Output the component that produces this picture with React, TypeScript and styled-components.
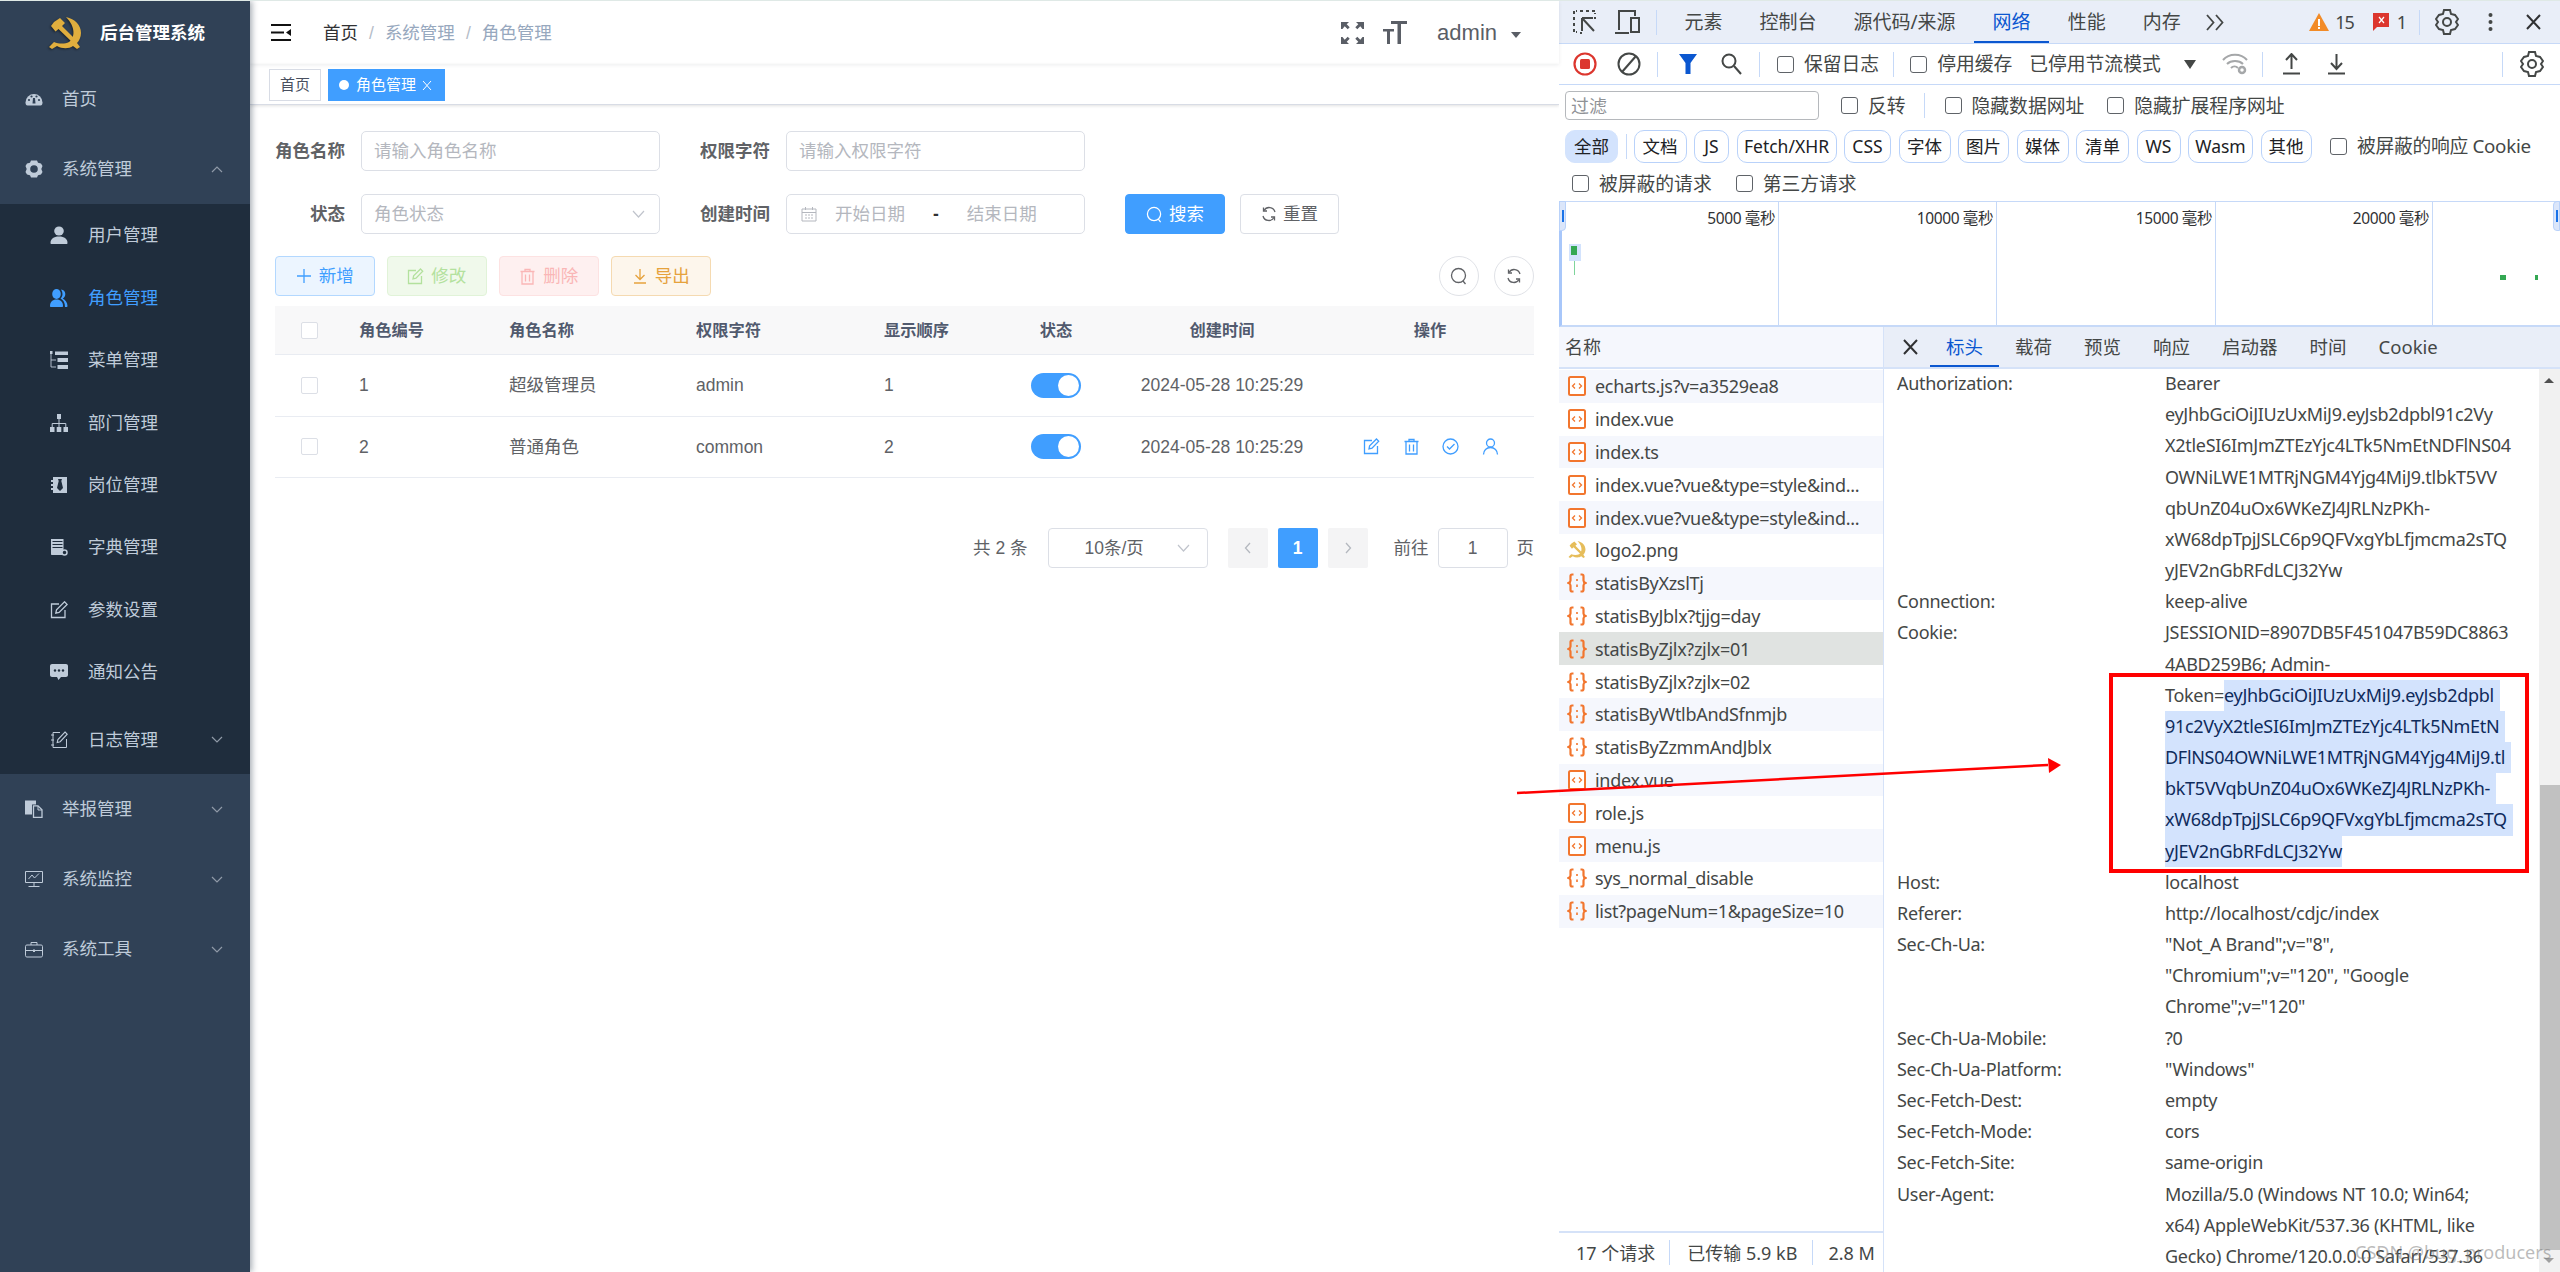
import React from 'react';
import styled, { createGlobalStyle } from 'styled-components';

const Global = createGlobalStyle`
  html, body { margin: 0; padding: 0; width: 2560px; height: 1272px; overflow: hidden; background: #fff; }
  * { box-sizing: border-box; }
  #root { width: 2560px; height: 1272px; }
`;

const SANS = `"Liberation Sans", "Noto Sans CJK SC", sans-serif`;
const DEV = `"Noto Sans", "Noto Sans CJK SC", sans-serif`;

const Page = styled.div`
  position: relative; display: flex; width: 2560px; height: 1272px; overflow: hidden;
  border-top: 1px solid #dfe9e6; font-family: ${SANS}; line-height: 22px;
`;

/* ---------- sidebar ---------- */
const Sidebar = styled.aside`
  width: 250px; flex: none; background: #304156; display: flex; flex-direction: column;
  box-shadow: 2px 0 6px rgba(0, 21, 41, .35); z-index: 2;
`;
const Brand = styled.div`
  height: 63px; display: flex; align-items: center; padding-left: 48px; gap: 18px;
  color: #fff; font-weight: 700; font-size: 17.5px;
`;
const MenuRow = styled.div<{ $sub?: boolean; $active?: boolean }>`
  height: ${p => (p.$sub ? '62.45px' : '70px')}; display: flex; align-items: center; flex: none;
  padding-left: ${p => (p.$sub ? '50px' : '25px')};
  color: ${p => (p.$active ? '#409eff' : '#bfcbd9')}; font-size: 17.5px; position: relative;
`;
const LogRow = styled(MenuRow)`
  height: 71px; padding-top: 1px;
`;
const MenuLabel = styled.span<{ $sub?: boolean }>`
  margin-left: ${p => (p.$sub ? '20px' : '19px')};
`;
const SubMenu = styled.div`
  background: #1f2d3d; display: flex; flex-direction: column; height: 570px;
`;
const Chevron = styled.svg`
  margin-left: auto; margin-right: 27px; width: 12px; height: 7px; flex: none; fill: none; stroke: #909aa8; stroke-width: 1.2;
`;
const MenuIcon = styled.svg`
  width: 18px; height: 18px; flex: none; fill: currentColor;
`;

const Dashboard = () => (
  <MenuIcon viewBox="0 0 18 18">
    <path d="M.5 12.5a8.5 8.5 0 0 1 17 0c0 2-.7 3-2 3h-13c-1.300 0-2-1-2-3z" />
    <g fill="#304156">
      <circle cx="4" cy="10" r="1.100" /><circle cx="6.500" cy="6.500" r="1.100" /><circle cx="11.500" cy="6.500" r="1.100" /><circle cx="14" cy="10" r="1.100" />
      <path d="M8 8h2l.5 5.500h-3z" />
    </g>
  </MenuIcon>
);
const Gear = () => (
  <MenuIcon viewBox="0 0 18 18">
    <path fillRule="evenodd" d="M6 .5h6l1 2.300 3 .7 1.500 2.500-1.200 3 1.200 3L16 14.500l-3 .7-1 2.300H6l-1-2.300-3-.7L.5 12l1.200-3-1.200-3L2 3.500l3-.7zM9 5.200a3.800 3.800 0 1 0 0 7.600 3.800 3.800 0 0 0 0-7.600z" />
  </MenuIcon>
);
const UserI = () => (
  <MenuIcon viewBox="0 0 18 18"><ellipse cx="9" cy="5" rx="4.800" ry="4.500" /><path d="M.5 17c0-4 3-6.500 8.500-6.500s8.500 2.500 8.500 6.500c0 .6-.4 1-1 1h-15c-.6 0-1-.4-1-1z" /></MenuIcon>
);
const Peoples = () => (
  <MenuIcon viewBox="0 0 18 18"><ellipse cx="6.500" cy="5" rx="4.300" ry="5" /><path d="M0 17c0-4 2.500-6.500 6.500-6.500S13 13 13 17c0 .6-.4 1-1 1H1c-.6 0-1-.4-1-1z" /><path d="M11 .5c3 .3 4.300 2.500 4.300 4.500s-1 3.500-2.500 4.500c2.500 1.500 4.700 4 4.700 7.500 0 .6-.4 1-1 1h-1.500c0-4-1.500-7-4.500-8.500 1.500-1.500 2-3 2-4.500S12 2 11 .5z" /></MenuIcon>
);
const TreeTable = () => (
  <MenuIcon viewBox="0 0 18 18"><path d="M0 0h2.500v3H0zM5 .5h13v3.500H5zM7.500 7h10.500v4H7.500zM7.500 14h10.500v4H7.500z" /><path d="M1 3v13h5M1 9h5" fill="none" stroke="currentColor" strokeWidth=".9" /></MenuIcon>
);
const Tree = () => (
  <MenuIcon viewBox="0 0 18 18"><path d="M7 0h4v5H7zM0 13h4.500v5H0zM6.700 13h4.600v5H6.700zM13.500 13H18v5h-4.500z" /><path d="M9 5v8M2.200 13V9.500h13.600V13" fill="none" stroke="currentColor" strokeWidth="1" /></MenuIcon>
);
const Post = () => (
  <MenuIcon viewBox="0 0 18 18">
    <path d="M3 1h14v16H3zM1 4h2v2H1zM1 8h2v2H1zM1 12h2v2H1z" />
    <path fill="#1f2d3d" d="M8 3h4l-.7 2 1.700 7-3 3-3-3 1.700-7z" />
  </MenuIcon>
);
const Dict = () => (
  <MenuIcon viewBox="0 0 18 18">
    <path d="M1 1h12.500v16H2c-.6 0-1-.4-1-1z" />
    <path d="M2.500 3.500h10M2.500 6.500h10M2.500 9.500h10" stroke="#1f2d3d" strokeWidth="1" />
    <circle cx="14.500" cy="14.500" r="2.500" fill="#1f2d3d" stroke="currentColor" strokeWidth="1.500" />
  </MenuIcon>
);
const EditI = () => (
  <MenuIcon viewBox="0 0 18 18">
    <path d="M9 3H1.500v13.500H15V9" fill="none" stroke="currentColor" strokeWidth="1.300" />
    <path d="M14.500.8l2.600 2.600-8 8-3.300.7.700-3.300z" fill="none" stroke="currentColor" strokeWidth="1.300" />
  </MenuIcon>
);
const Message = () => (
  <MenuIcon viewBox="0 0 18 18">
    <path d="M2 1h14c1 0 2 .8 2 2v9c0 1-1 2-2 2h-5l-2.500 3L7 14H2c-1 0-2-1-2-2V3c0-1.200 1-2 2-2z" />
    <g fill="#1f2d3d"><circle cx="5" cy="7.500" r="1.200" /><circle cx="9" cy="7.500" r="1.200" /><circle cx="13" cy="7.500" r="1.200" /></g>
  </MenuIcon>
);
const LogI = () => (
  <MenuIcon viewBox="0 0 18 18">
    <path d="M10 1.500H3v15h13.500V8" fill="none" stroke="currentColor" strokeWidth="1" />
    <path d="M15 1l2.200 2.200-7 7.500-3 .8.700-3z" fill="none" stroke="currentColor" strokeWidth="1.100" />
    <path d="M1 4h3M1 9h3M1 14h3" stroke="currentColor" strokeWidth="1" />
  </MenuIcon>
);
const Docs = () => (
  <MenuIcon viewBox="0 0 18 18">
    <path d="M0 .5h11v4H7v10H0z" />
    <path d="M8.500 5.800H13l4 4v7.700H8.500z" fill="none" stroke="currentColor" strokeWidth="1.300" />
    <path d="M13 6v4h4" fill="none" stroke="currentColor" strokeWidth="1" />
  </MenuIcon>
);
const Monitor = () => (
  <MenuIcon viewBox="0 0 18 18">
    <path d="M.5 1.500h17v11H.5zM9 12.500V16M3.500 16.500h11" fill="none" stroke="currentColor" strokeWidth="1" />
    <path d="M3.500 9L7 5l2.500 3L14 3.500" fill="none" stroke="currentColor" strokeWidth="1" />
  </MenuIcon>
);
const Briefcase = () => (
  <MenuIcon viewBox="0 0 18 18">
    <path d="M1.800 5h14.400c.7 0 1.300.6 1.300 1.300v9.400c0 .7-.6 1.300-1.300 1.300H1.800c-.7 0-1.300-.6-1.300-1.300V6.300C.5 5.600 1.100 5 1.800 5zM6 5V2.500h6V5M.5 10.500h17" fill="none" stroke="currentColor" strokeWidth="1" />
    <path d="M8 9.500h2v2.500H8z" />
  </MenuIcon>
);

const Up = () => <Chevron viewBox="0 0 12 7"><path d="M1 6l5-5 5 5" /></Chevron>;
const Down = () => <Chevron viewBox="0 0 12 7"><path d="M1 1l5 5 5-5" /></Chevron>;

const SICKLE = 'M18 1C27 3 33 9 33 17C33 21 31 25 29 27L32 31L29 33L25 30C21 33 14 33 9 30L4 33L1 31L6 26C11 28 17 28 21 26C27 22 28 11 18 1z';
const HAMMER = 'M6 6L12 2L17 7L14 10L27 23L24 26L10.500 13L7.500 15.500L3 10z';
const LogoSvg = styled.svg`
  flex: none; filter: drop-shadow(-1px 1px 1px rgba(0, 0, 0, .45));
`;
const Logo = () => (
  <LogoSvg width="34" height="34" viewBox="0 0 34 34"><g fill="#e0ae3e"><path d={SICKLE} /><path d={HAMMER} /></g></LogoSvg>
);

/* ---------- main ---------- */
const Main = styled.main`
  width: 1309px; flex: none; display: flex; flex-direction: column; color: #606266;
`;
const TopNav = styled.header`
  height: 63px; flex: none; display: flex; align-items: center; padding-left: 21px;
  box-shadow: 0 1px 4px rgba(0, 21, 41, .08); position: relative; z-index: 1;
`;
const Crumbs = styled.nav`
  margin-left: 32px; display: flex; font-size: 17.5px; color: #303133;
`;
const Crumb = styled.span<{ $muted?: boolean }>`
  color: ${p => (p.$muted ? '#97a8be' : '#303133')};
`;
const CrumbSep = styled.span`
  color: #b5bcc8; margin: 0 11px; font-weight: 400;
`;
const NavRight = styled.div`
  margin-left: auto; display: flex; align-items: center; color: #5a5e66; padding-right: 38px;
`;
const AdminName = styled.span`
  font-size: 22px; margin-left: 30px;
`;
const Caret = styled.i`
  margin-left: 14px; margin-top: 5px; width: 0; height: 0; border-left: 5px solid transparent; border-right: 5px solid transparent; border-top: 6px solid #5a5e66;
`;
const TabsBar = styled.div`
  height: 41px; flex: none; display: flex; align-items: flex-start; padding: 5px 0 0 19px; gap: 7px;
  border-bottom: 1px solid #d8dce5; box-shadow: 0 1px 3px rgba(0, 0, 0, .12);
`;
const Tag = styled.div<{ $active?: boolean }>`
  height: 32px; padding: 0 ${p => (p.$active ? '12px' : '10px')} 0 10px; display: flex; align-items: center;
  font-size: 15px; border: 1px solid ${p => (p.$active ? '#409eff' : '#d8dce5')};
  background: ${p => (p.$active ? '#409eff' : '#fff')}; color: ${p => (p.$active ? '#fff' : '#495060')};
`;
const Dot = styled.i`
  width: 10px; height: 10px; border-radius: 50%; background: #fff; margin-right: 7px;
`;
const TagClose = styled.svg`
  width: 10px; height: 11px; margin-left: 6px; fill: none; stroke: #fff; stroke-width: 1;
`;
const Content = styled.section`
  padding: 26px 25px 0 25px; display: flex; flex-direction: column;
`;
const FormRow = styled.div`
  display: flex; align-items: center; height: 40px; margin-bottom: 23px;
`;
const FormRowLast = styled(FormRow)`
  margin-bottom: 22px;
`;
const Label = styled.label<{ $next?: boolean }>`
  width: 70px; text-align: right; font-size: 17.5px; font-weight: 700; color: #606266; flex: none; margin-right: 16px;
  margin-left: ${p => (p.$next ? '40px' : '0')};
`;
const Field = styled.div`
  width: 299px; height: 40px; border: 1px solid #dcdfe6; border-radius: 5px; display: flex; align-items: center;
  padding: 0 12px; font-size: 17.5px; color: #b4b7be; flex: none;
`;
const FieldChevron = styled.svg`
  margin-left: auto; width: 13px; height: 8px; fill: none; stroke: #c0c4cc; stroke-width: 1.200;
`;
const DateText = styled.span<{ $start?: boolean }>`
  margin-left: ${p => (p.$start ? '18px' : '28px')};
`;
const DateDash = styled.span`
  margin-left: 28px; color: #303133; font-weight: 700;
`;
const DateField = styled(Field)`
  padding: 0 14px;
`;
const SelectField = styled(Field)`
  padding: 0 14px 0 12px;
`;
const Btn = styled.button<{ $primary?: boolean; $first?: boolean }>`
  height: 40px; width: ${p => (p.$primary ? '100px' : '99px')}; margin-left: ${p => (p.$first ? '40px' : '15px')};
  border-radius: 4px; font: 17.5px/22px ${SANS}; display: flex; align-items: center; justify-content: center; gap: 6px; padding: 0;
  background: ${p => (p.$primary ? '#409eff' : '#fff')}; color: ${p => (p.$primary ? '#fff' : '#606266')};
  border: 1px solid ${p => (p.$primary ? '#409eff' : '#dcdfe6')};
`;
const Tools = styled.div`
  display: flex; align-items: center; height: 40px; margin-bottom: 10px; gap: 12.500px;
`;
const ToolBtn = styled.button<{ $bg: string; $bd: string; $fg: string }>`
  height: 40px; width: 99.500px; border-radius: 4px; font: 17.5px/22px ${SANS}; padding: 0; display: flex; align-items: center; justify-content: center; gap: 7px;
  background: ${p => p.$bg}; border: 1px solid ${p => p.$bd}; color: ${p => p.$fg};
`;
const CircleBtn = styled.button<{ $first?: boolean }>`
  width: 40px; height: 40px; border-radius: 50%; background: #fff; border: 1px solid #e0e2e7; padding: 0; color: #606266;
  display: flex; align-items: center; justify-content: center; flex: none;
  margin-left: ${p => (p.$first ? 'auto' : '2.500px')};
`;
const TableRow = styled.div<{ $head?: boolean; $h: string }>`
  display: grid; grid-template-columns: 69px 150px 187px 188px 125px 124px 208px 208px; align-items: center;
  height: ${p => p.$h}; border-bottom: 1px solid #e9ecf2; background: ${p => (p.$head ? '#f8f8f9' : '#fff')};
  color: ${p => (p.$head ? '#515a6e' : '#606266')}; font-size: ${p => (p.$head ? '16.250px' : '17.500px')};
  font-weight: ${p => (p.$head ? 700 : 400)};
`;
const Cell = styled.div<{ $center?: boolean }>`
  padding-left: ${p => (p.$center ? '0' : '15px')}; text-align: ${p => (p.$center ? 'center' : 'left')};
  display: ${p => (p.$center ? 'flex' : 'block')}; justify-content: center; align-items: center;
`;
const CheckCell = styled.div`
  padding-left: 26px; display: flex;
`;
const Box = styled.span`
  width: 17px; height: 17px; border: 1px solid #dcdfe6; border-radius: 2px; background: #fff; display: block;
`;
const Toggle = styled.span`
  width: 50px; height: 25px; border-radius: 13px; background: #409eff; position: relative; display: block;
  &::after { content: ''; position: absolute; right: 2px; top: 2px; width: 21px; height: 21px; border-radius: 50%; background: #fff; }
`;
const Actions = styled.div`
  display: flex; justify-content: center; gap: 22.500px; color: #409eff; align-items: center; padding-left: 2px;
`;
const Pager = styled.div`
  margin-top: 50px; height: 40px; display: flex; align-items: center; justify-content: flex-end; font-size: 17.5px; color: #606266;
`;
const PageSize = styled.div`
  margin-left: 20px; width: 160px; height: 40px; border: 1px solid #dcdfe6; border-radius: 4px; display: flex; align-items: center; padding: 0 17px 0 36px;
`;
const PageBtn = styled.div<{ $active?: boolean; $first?: boolean }>`
  width: 40px; height: 40px; border-radius: 2px; margin-left: ${p => (p.$first ? '20px' : '10px')};
  background: ${p => (p.$active ? '#409eff' : '#f4f4f5')}; color: ${p => (p.$active ? '#fff' : '#b4b8bf')}; font-weight: 700;
  display: flex; align-items: center; justify-content: center;
`;
const PageInput = styled.div`
  width: 70px; height: 40px; border: 1px solid #dcdfe6; border-radius: 4px; display: flex; align-items: center; justify-content: center; margin: 0 9px;
`;
const GoLabel = styled.span`
  margin-left: 26px;
`;

const Ic = styled.svg<{ $s?: number }>`
  width: ${p => p.$s ?? 17}px; height: ${p => p.$s ?? 17}px; fill: none; stroke: currentColor; stroke-width: 1.300; flex: none;
`;
const SearchI = ({ s = 18 }: { s?: number }) => <Ic $s={s} viewBox="0 0 18 18"><circle cx="8.500" cy="8.500" r="7" /><path d="M13 14l2.500 3" /></Ic>;
const RefreshI = ({ s = 16 }: { s?: number }) => <Ic $s={s} viewBox="0 0 16 16"><path d="M14 6a6 6 0 0 0-11-1.500M2 10a6 6 0 0 0 11 1.500" /><path d="M2.500 1.500v3.500H6M13.500 14.500V11H10" /></Ic>;
const EditSm = () => <Ic viewBox="0 0 17 17"><path d="M9 2.500H1.500v13h13V8" /><path d="M13.500 1l2.200 2.200-6.700 7-3 .6.600-3z" /></Ic>;
const Trash = () => <Ic viewBox="0 0 17 17"><path d="M1.500 3.500h14M6 3.500V1.500h5v2M3 3.500v12.500h11V3.500M6.500 6.500v7M10.500 6.500v7" /></Ic>;
const CheckC = () => <Ic viewBox="0 0 17 17"><circle cx="8.500" cy="8.500" r="7.500" /><path d="M5 8.500l2.500 2.500L12.500 6" /></Ic>;
const UserSm = () => <Ic viewBox="0 0 17 17"><circle cx="8.500" cy="5" r="4" /><path d="M1.500 16.500c0-4 3-7 7-7s7 3 7 7" /></Ic>;
const Plus = () => <Ic $s={16} viewBox="0 0 16 16"><path d="M8 1v14M1 8h14" /></Ic>;
const Download = () => <Ic $s={16} viewBox="0 0 16 16"><path d="M8 1v10M3.500 7L8 11.500 12.500 7M2 15h12" /></Ic>;
const Calendar = () => <Ic $s={16} viewBox="0 0 16 16"><path d="M1 3h14v12H1zM1 6.500h14M4 9h2M7 9h2M10 9h2M4 12h2M7 12h2M10 12h2M4.500 1v3M11.500 1v3" strokeWidth="1" /></Ic>;
const PagerArrow = ({ left }: { left?: boolean }) => <Ic $s={12} viewBox="0 0 12 12"><path d={left ? 'M8 1L3.500 6 8 11' : 'M4 1l4.500 5L4 11'} /></Ic>;
const Hamburger = () => (
  <svg width="20" height="17" viewBox="0 0 20 17" fill="#111"><path d="M0 0h20v2H0zM0 7.500h13v2H0zM0 15h20v2H0zM15 8.500L20 5v7z" /></svg>
);
const Expand = () => (
  <svg width="23" height="22" viewBox="0 0 23 22" fill="#5a5e66">
    <path d="M0 0h8L5.700 2.300l3 3-2 2-3-3L1.500 7H0zM23 0h-8l2.300 2.300-3 3 2 2 3-3L21.500 7H23zM0 22h8l-2.300-2.300 3-3-2-2-3 3L1.500 15H0zM23 22h-8l2.300-2.300-3-3 2-2 3 3 2.200-2.700H23z" />
  </svg>
);
const FontSizeSvg = styled.svg`
  margin-left: 19px; fill: #5a5e66;
`;
const FontSizeI = () => (
  <FontSizeSvg width="24" height="23" viewBox="0 0 24 23">
    <path d="M8 0h16v3h-6v20h-3.500V3H8zM0 8h11v2.500H7V23H4V10.500H0z" />
  </FontSizeSvg>
);

/* ---------- devtools ---------- */
const Dev = styled.div`
  width: 1001px; flex: none; display: flex; flex-direction: column; font-family: ${DEV}; font-size: 18px; color: #444746; background: #fff; letter-spacing: -.3px;
`;
const DevBar = styled.div`
  height: 43px; flex: none; background: #e9eef8; border-bottom: 1px solid #c6d9f8; display: flex; align-items: stretch; padding-left: 14px;
`;
const DevTab = styled.div<{ $active?: boolean }>`
  display: flex; align-items: center; padding: 0 18.500px; font-size: 19px; letter-spacing: 0;
  color: ${p => (p.$active ? '#0b57d0' : '#444746')}; box-shadow: ${p => (p.$active ? 'inset 0 -2px 0 #0b57d0' : 'none')};
`;
const Sep = styled.i<{ $ml?: number; $mr?: number }>`
  width: 1px; height: 25px; background: #c6d9f8; flex: none; align-self: center;
  margin-left: ${p => p.$ml ?? 0}px; margin-right: ${p => p.$mr ?? 0}px;
`;
const IconSlot = styled.span<{ $ml?: number }>`
  display: flex; align-items: center; margin-left: ${p => p.$ml ?? 0}px; flex: none; color: #444746;
`;
const CountText = styled.span<{ $ml?: number }>`
  margin-left: ${p => p.$ml ?? 0}px; align-self: center; font-size: 18px; color: #444746; letter-spacing: -1px;
`;
const DevRow = styled.div<{ $h: number; $pl?: number; $line?: boolean }>`
  height: ${p => p.$h}px; flex: none; display: flex; align-items: center; padding-left: ${p => p.$pl ?? 0}px;
  border-bottom: ${p => (p.$line ? '1px solid #c6d9f8' : 'none')}; white-space: nowrap;
`;
const CB = styled.i<{ $ml?: number }>`
  width: 17px; height: 17px; border: 1.500px solid #5f6368; border-radius: 3px; flex: none; margin-left: ${p => p.$ml ?? 0}px; display: block;
`;
const CBText = styled.span<{ $tight?: boolean }>`
  margin-left: 10px; letter-spacing: ${p => (p.$tight ? '-.3px' : '0')}; font-size: 18.800px;
`;
const FilterBox = styled.div`
  width: 254px; height: 29px; border: 1px solid #b5b8bc; border-radius: 4px; color: #8f9296; padding-left: 5px; display: flex; align-items: center; flex: none; margin-left: 6px; letter-spacing: 0;
`;
const Pill = styled.span<{ $w: number; $active?: boolean }>`
  width: ${p => p.$w}px; height: 33px; border-radius: 10px; display: flex; align-items: center; justify-content: center; flex: none; margin-right: 7.500px; font-size: 17.5px; letter-spacing: 0;
  background: ${p => (p.$active ? '#d3e3fd' : '#fff')}; border: 1px solid ${p => (p.$active ? '#d3e3fd' : '#b9d2fa')}; color: #202124;
`;
const Overview = styled.div`
  height: 126px; flex: none; display: grid; grid-template-columns: 217px 218px 219px 217px 1fr; position: relative;
  border-top: 1px solid #c6d9f8; border-bottom: 2px solid #c6d9f8; border-left: 3px solid #a8c7fa;
`;
const Tick = styled.div`
  border-right: 1px solid #c6d9f8; text-align: right; padding: 5px 3px 0 0; font-size: 15.5px; color: #303133; letter-spacing: -.4px;
`;
const TickLast = styled.div``;
const Handle = styled.i<{ $right?: boolean }>`
  position: absolute; top: -1px; width: 7px; height: 30px; background: #dbe6fa; border: 1px solid #b9d2fa;
  ${p => (p.$right ? 'right: 0; border-radius: 4px 0 0 4px;' : 'left: -3px; border-radius: 0 0 4px 0;')}
  &::after { content: ''; position: absolute; top: 8px; left: 2px; width: 2px; height: 12px; background: #1a73e8; }
`;
const Blip = styled.i<{ $x: number; $y: number; $w: number; $h: number; $c: string }>`
  position: absolute; left: ${p => p.$x}px; top: ${p => p.$y}px; width: ${p => p.$w}px; height: ${p => p.$h}px; background: ${p => p.$c};
`;
const Lower = styled.div`
  flex: 1; min-height: 0; display: flex;
`;
const NamesPane = styled.div`
  width: 325px; flex: none; display: flex; flex-direction: column; border-right: 1px solid #d5e2f8;
`;
const NamesHead = styled.div`
  height: 42px; flex: none; background: #f5f7fd; border-bottom: 2px solid #d5e2f8; display: flex; align-items: center; padding-left: 6px; letter-spacing: 0;
`;
const NameList = styled.div`
  flex: 1; min-height: 0; padding-top: 1px;
`;
const NameRow = styled.div<{ $odd?: boolean; $sel?: boolean }>`
  height: 32.800px; display: flex; align-items: center; padding-left: 8px; gap: 8px; white-space: nowrap; overflow: hidden;
  background: ${p => (p.$sel ? '#e0e3e1' : p.$odd ? '#f5f7fd' : '#fff')};
`;
const IconBox = styled.span`
  width: 20px; flex: none; display: flex; justify-content: center;
`;
const StatusBar = styled.div`
  height: 41px; flex: none; border-top: 2px solid #d5e2f8; display: flex; align-items: center; padding-left: 17px; letter-spacing: 0;
`;
const DetailPane = styled.div`
  flex: 1; min-width: 0; display: flex; flex-direction: column;
`;
const DetailTabs = styled.div`
  height: 42px; flex: none; background: #e9eef8; border-bottom: 2px solid #d5e2f8; display: flex; align-items: stretch; padding-left: 19px;
`;
const DetailTab = styled.div<{ $active?: boolean }>`
  display: flex; align-items: center; padding: 0 16px; letter-spacing: 0; font-size: 18.500px;
  color: ${p => (p.$active ? '#0b57d0' : '#444746')}; box-shadow: ${p => (p.$active ? 'inset 0 -2px 0 #0b57d0' : 'none')};
`;
const DetailBody = styled.div`
  flex: 1; min-height: 0; display: flex;
`;
const HeaderList = styled.div`
  flex: 1; min-width: 0; overflow: hidden; padding-left: 13px;
`;
const HeaderFlow = styled.div`
  margin-top: -1px;
`;
const HeaderRow = styled.div`
  display: grid; grid-template-columns: 268px 1fr; line-height: 31.180px; white-space: nowrap;
`;
const ValLine = styled.div`
  height: 31.180px;
`;
const Sel = styled.span<{ $tail?: boolean }>`
  background: #d3e3fd; display: inline-block; height: 31.180px; color: #0f2b5c; padding-right: ${p => (p.$tail ? '0' : '6px')};
`;
const Scrollbar = styled.div`
  width: 21px; flex: none; background: #f1f1f1; position: relative;
`;
const ScrollThumb = styled.i`
  position: absolute; top: 416px; bottom: 22px; left: 1px; right: 0; background: #c1c1c1;
`;
const ScrollArrow = styled.i<{ $down?: boolean }>`
  position: absolute; left: 5px; width: 0; height: 0; border-left: 5px solid transparent; border-right: 5px solid transparent;
  ${p => (p.$down ? 'bottom: 9px; border-top: 5px solid #a0a0a0;' : 'top: 9px; border-bottom: 5px solid #505050;')}
`;
const RedBox = styled.div`
  position: absolute; left: 2109px; top: 672px; width: 420px; height: 200px; border: 4px solid #f00; pointer-events: none;
`;
const ArrowLayer = styled.svg`
  position: absolute; left: 1500px; top: 745px; width: 580px; height: 60px; pointer-events: none;
`;
const Watermark = styled.div`
  position: absolute; left: 2355px; top: 1240px; font-family: ${DEV}; font-size: 18px; color: rgba(120, 120, 120, .5); white-space: nowrap;
`;

const S = styled.svg`flex: none; display: block;`;
const DocIcon = () => (
  <S width="18" height="20" viewBox="0 0 18 20" fill="none">
    <rect x="1" y="1" width="16" height="18" rx="1.500" fill="#fff" stroke="#f2762e" strokeWidth="2" />
    <path d="M7 7.500L4.500 10 7 12.500M11 7.500l2.500 2.500-2.500 2.500" stroke="#f2762e" strokeWidth="1.300" />
  </S>
);
const BraceIcon = () => (
  <S width="20" height="20" viewBox="0 0 20 20" fill="none" stroke="#f2762e" strokeWidth="2.200">
    <path d="M6.500 1.500H5c-1 0-1.500.7-1.500 1.700v4.300c0 1-.7 2-2 2.500 1.300.5 2 1.500 2 2.500v4.300c0 1 .5 1.700 1.500 1.700h1.500" />
    <path d="M13.500 1.500H15c1 0 1.500.7 1.500 1.700v4.300c0 1 .7 2 2 2.500-1.300.5-2 1.500-2 2.500v4.300c0 1-.5 1.700-1.500 1.700h-1.500" />
    <path d="M10 6v2M10 11.500v2.500" strokeWidth="1.600" />
  </S>
);
const PngIcon = () => (
  <S width="18" height="20" viewBox="0 0 34 36"><g fill="#e6bd5a"><path d={SICKLE} /><path d={HAMMER} /></g></S>
);
const DevGear = ({ size = 24 }: { size?: number }) => (
  <S width={size} height={size + 4} viewBox="0 0 24 28" fill="none" stroke="#444746" strokeWidth="2">
    <path d="M9 2h6l1 4 4 1 3 4-2 3 2 3-3 4-4 1-1 4H9l-1-4-4-1-3-4 2-3-2-3 3-4 4-1z" />
    <circle cx="12" cy="14" r="4" />
  </S>
);
const Inspect = () => (
  <S width="23" height="24" viewBox="0 0 23 24" fill="none" stroke="#444746" strokeWidth="2">
    <path d="M1 4V1h3M7 1h3M13 1h3M19 1h3v3M1 7v3M1 13v3M1 19v3h3M7 23h2M22 7v2" strokeDasharray="3 2" />
    <path d="M9 8v13M9 8h11M9 8l12 13" />
  </S>
);
const Device = () => (
  <S width="26" height="24" viewBox="0 0 26 24" fill="none" stroke="#444746" strokeWidth="2">
    <path d="M5 20V1h16v5M1 23h14" />
    <rect x="17" y="8" width="8" height="14" />
  </S>
);
const Warn = () => (
  <S width="20" height="18" viewBox="0 0 20 18"><path d="M10 0l10 18H0z" fill="#f28b27" /><path d="M9 6h2v7H9zM9 14h2v2H9z" fill="#fff" /></S>
);
const Flag = () => (
  <S width="17" height="18" viewBox="0 0 17 18"><path d="M0 0h16v14H4l-4 4z" fill="#dc362e" /><path d="M6 4l5 6M11 4l-5 6" stroke="#fff" strokeWidth="1.200" /></S>
);
const Chevrons = () => (
  <S width="20" height="17" viewBox="0 0 20 17" fill="none" stroke="#444746" strokeWidth="1.800"><path d="M2 1l6.500 7.500L2 16M11 1l6.500 7.500L11 16" /></S>
);
const Kebab = () => (
  <S width="5" height="20" viewBox="0 0 5 20" fill="#444746"><circle cx="2.500" cy="3" r="2" /><circle cx="2.500" cy="10" r="2" /><circle cx="2.500" cy="17" r="2" /></S>
);
const CloseX = () => (
  <S width="15" height="16" viewBox="0 0 15 16" fill="none" stroke="#303133" strokeWidth="2"><path d="M1 1l13 14M14 1L1 15" /></S>
);
const Rec = () => (
  <S width="24" height="24" viewBox="0 0 24 24" fill="none"><circle cx="12" cy="12" r="10.500" stroke="#dc362e" strokeWidth="2.200" /><rect x="7" y="7" width="10" height="10" rx="1.500" fill="#dc362e" /></S>
);
const Clear = () => (
  <S width="24" height="24" viewBox="0 0 24 24" fill="none" stroke="#444746" strokeWidth="2"><circle cx="12" cy="12" r="10.500" /><path d="M19 4L5 20" /></S>
);
const Funnel = () => (
  <S width="18" height="20" viewBox="0 0 18 20"><path d="M0 0h18l-6.500 9v11h-5V9z" fill="#0b57d0" /></S>
);
const DevSearch = () => (
  <S width="21" height="22" viewBox="0 0 21 22" fill="none" stroke="#444746" strokeWidth="2"><circle cx="8" cy="8" r="6.500" /><path d="M13 13l7 8" /></S>
);
const Wifi = () => (
  <S width="26" height="22" viewBox="0 0 26 22" fill="none" stroke="#a5a7a9" strokeWidth="2">
    <path d="M1 7c6-7 18-7 24 0M5 11c4-4 12-4 16 0M9 15c2-2 5-2 7 0" />
    <circle cx="20" cy="17" r="3" strokeWidth="2.500" />
  </S>
);
const UpI = () => (
  <S width="19" height="22" viewBox="0 0 19 22" fill="none" stroke="#444746" strokeWidth="2"><path d="M9.500 16V2M4 7l5.500-6L15 7M1 20.500h17" /></S>
);
const DownI = () => (
  <S width="19" height="22" viewBox="0 0 19 22" fill="none" stroke="#444746" strokeWidth="2"><path d="M9.500 1v14M4 10l5.500 6 5.500-6M1 20.500h17" /></S>
);
const TriDown = styled.i`
  margin-left: 23px; width: 0; height: 0; border-left: 6px solid transparent; border-right: 6px solid transparent; border-top: 9px solid #444746; flex: none;
`;
const Spaced = styled.span<{ $ml: number }>`
  margin-left: ${p => p.$ml}px; letter-spacing: 0; font-size: 18.800px;
`;

const sub = [
  { t: '用户管理', I: UserI }, { t: '角色管理', I: Peoples, active: true }, { t: '菜单管理', I: TreeTable },
  { t: '部门管理', I: Tree }, { t: '岗位管理', I: Post }, { t: '字典管理', I: Dict },
  { t: '参数设置', I: EditI }, { t: '通知公告', I: Message },
];
const files: [string, 'doc' | 'brace' | 'png'][] = [
  ['echarts.js?v=a3529ea8', 'doc'], ['index.vue', 'doc'], ['index.ts', 'doc'],
  ['index.vue?vue&type=style&ind...', 'doc'], ['index.vue?vue&type=style&ind...', 'doc'], ['logo2.png', 'png'],
  ['statisByXzslTj', 'brace'], ['statisByJblx?tjjg=day', 'brace'], ['statisByZjlx?zjlx=01', 'brace'],
  ['statisByZjlx?zjlx=02', 'brace'], ['statisByWtlbAndSfnmjb', 'brace'], ['statisByZzmmAndJblx', 'brace'],
  ['index.vue', 'doc'], ['role.js', 'doc'], ['menu.js', 'doc'], ['sys_normal_disable', 'brace'],
  ['list?pageNum=1&pageSize=10', 'brace'],
];
const pills: [string, number][] = [['文档', 53], ['JS', 35], ['Fetch/XHR', 100], ['CSS', 47], ['字体', 52], ['图片', 51], ['媒体', 52], ['清单', 53], ['WS', 44], ['Wasm', 65], ['其他', 51]];

const headers: { k: string; v: React.ReactNode[] }[] = [
  { k: 'Authorization:', v: ['Bearer', 'eyJhbGciOiJIUzUxMiJ9.eyJsb2dpbl91c2Vy', 'X2tleSI6ImJmZTEzYjc4LTk5NmEtNDFlNS04', 'OWNiLWE1MTRjNGM4Yjg4MiJ9.tlbkT5VV', 'qbUnZ04uOx6WKeZJ4JRLNzPKh-', 'xW68dpTpjJSLC6p9QFVxgYbLfjmcma2sTQ', 'yJEV2nGbRFdLCJ32Yw'] },
  { k: 'Connection:', v: ['keep-alive'] },
  {
    k: 'Cookie:', v: [
      'JSESSIONID=8907DB5F451047B59DC8863', '4ABD259B6; Admin-',
      <>Token=<Sel>eyJhbGciOiJIUzUxMiJ9.eyJsb2dpbl</Sel></>,
      <Sel>91c2VyX2tleSI6ImJmZTEzYjc4LTk5NmEtN</Sel>,
      <Sel>DFlNS04OWNiLWE1MTRjNGM4Yjg4MiJ9.tl</Sel>,
      <Sel>bkT5VVqbUnZ04uOx6WKeZJ4JRLNzPKh-</Sel>,
      <Sel>xW68dpTpjJSLC6p9QFVxgYbLfjmcma2sTQ</Sel>,
      <Sel $tail>yJEV2nGbRFdLCJ32Yw</Sel>,
    ],
  },
  { k: 'Host:', v: ['localhost'] },
  { k: 'Referer:', v: ['http://localhost/cdjc/index'] },
  { k: 'Sec-Ch-Ua:', v: ['"Not_A Brand";v="8",', '"Chromium";v="120", "Google', 'Chrome";v="120"'] },
  { k: 'Sec-Ch-Ua-Mobile:', v: ['?0'] },
  { k: 'Sec-Ch-Ua-Platform:', v: ['"Windows"'] },
  { k: 'Sec-Fetch-Dest:', v: ['empty'] },
  { k: 'Sec-Fetch-Mode:', v: ['cors'] },
  { k: 'Sec-Fetch-Site:', v: ['same-origin'] },
  { k: 'User-Agent:', v: ['Mozilla/5.0 (Windows NT 10.0; Win64;', 'x64) AppleWebKit/537.36 (KHTML, like', 'Gecko) Chrome/120.0.0.0 Safari/537.36'] },
];

const rows = [
  { id: '1', name: '超级管理员', key: 'admin', ord: '1', ops: false },
  { id: '2', name: '普通角色', key: 'common', ord: '2', ops: true },
];

export default function App() {
  return (
    <Page>
      <Global />
      <Sidebar>
        <Brand><Logo />后台管理系统</Brand>
        <MenuRow><Dashboard /><MenuLabel>首页</MenuLabel></MenuRow>
        <MenuRow><Gear /><MenuLabel>系统管理</MenuLabel><Up /></MenuRow>
        <SubMenu>
          {sub.map(s => (
            <MenuRow key={s.t} $sub $active={s.active}><s.I /><MenuLabel $sub>{s.t}</MenuLabel></MenuRow>
          ))}
          <LogRow $sub><LogI /><MenuLabel $sub>日志管理</MenuLabel><Down /></LogRow>
        </SubMenu>
        <MenuRow><Docs /><MenuLabel>举报管理</MenuLabel><Down /></MenuRow>
        <MenuRow><Monitor /><MenuLabel>系统监控</MenuLabel><Down /></MenuRow>
        <MenuRow><Briefcase /><MenuLabel>系统工具</MenuLabel><Down /></MenuRow>
      </Sidebar>

      <Main>
        <TopNav>
          <Hamburger />
          <Crumbs>
            <Crumb>首页</Crumb><CrumbSep>/</CrumbSep><Crumb $muted>系统管理</Crumb><CrumbSep>/</CrumbSep><Crumb $muted>角色管理</Crumb>
          </Crumbs>
          <NavRight>
            <Expand /><FontSizeI />
            <AdminName>admin</AdminName><Caret />
          </NavRight>
        </TopNav>
        <TabsBar>
          <Tag>首页</Tag>
          <Tag $active><Dot />角色管理<TagClose viewBox="0 0 10 11"><path d="M1 1l8 9M9 1l-8 9" /></TagClose></Tag>
        </TabsBar>
        <Content>
          <FormRow>
            <Label>角色名称</Label><Field>请输入角色名称</Field>
            <Label $next>权限字符</Label><Field>请输入权限字符</Field>
          </FormRow>
          <FormRowLast>
            <Label>状态</Label>
            <SelectField>角色状态<FieldChevron viewBox="0 0 13 8"><path d="M1 1l5.500 6L12 1" /></FieldChevron></SelectField>
            <Label $next>创建时间</Label>
            <DateField><Calendar /><DateText $start>开始日期</DateText><DateDash>-</DateDash><DateText>结束日期</DateText></DateField>
            <Btn $primary $first><SearchI s={17} />搜索</Btn>
            <Btn><RefreshI />重置</Btn>
          </FormRowLast>
          <Tools>
            <ToolBtn $bg="#ecf5ff" $bd="#b3d8ff" $fg="#409eff"><Plus />新增</ToolBtn>
            <ToolBtn $bg="#f0f9eb" $bd="#e1f3d8" $fg="#b3e19d"><EditSm />修改</ToolBtn>
            <ToolBtn $bg="#fef0f0" $bd="#fde2e2" $fg="#fab6b6"><Trash />删除</ToolBtn>
            <ToolBtn $bg="#fdf6ec" $bd="#f5dab1" $fg="#e6a23c"><Download />导出</ToolBtn>
            <CircleBtn $first><SearchI /></CircleBtn>
            <CircleBtn><RefreshI /></CircleBtn>
          </Tools>
          <div>
            <TableRow $head $h="49px">
              <CheckCell><Box /></CheckCell>
              <Cell>角色编号</Cell><Cell>角色名称</Cell><Cell>权限字符</Cell><Cell>显示顺序</Cell>
              <Cell $center>状态</Cell><Cell $center>创建时间</Cell><Cell $center>操作</Cell>
            </TableRow>
            {rows.map(r => (
              <TableRow key={r.id} $h="61.500px">
                <CheckCell><Box /></CheckCell>
                <Cell>{r.id}</Cell><Cell>{r.name}</Cell><Cell>{r.key}</Cell><Cell>{r.ord}</Cell>
                <Cell $center><Toggle /></Cell>
                <Cell $center>2024-05-28 10:25:29</Cell>
                {r.ops ? <Actions><EditSm /><Trash /><CheckC /><UserSm /></Actions> : <div />}
              </TableRow>
            ))}
          </div>
          <Pager>
            共 2 条
            <PageSize>10条/页<FieldChevron viewBox="0 0 13 8"><path d="M1 1l5.500 6L12 1" /></FieldChevron></PageSize>
            <PageBtn $first><PagerArrow left /></PageBtn>
            <PageBtn $active>1</PageBtn>
            <PageBtn><PagerArrow /></PageBtn>
            <GoLabel>前往</GoLabel>
            <PageInput>1</PageInput>
            页
          </Pager>
        </Content>
      </Main>

      <Dev>
        <DevBar>
          <IconSlot><Inspect /></IconSlot>
          <IconSlot $ml={18}><Device /></IconSlot>
          <Sep $ml={16} $mr={9} />
          <DevTab>元素</DevTab><DevTab>控制台</DevTab><DevTab>源代码/来源</DevTab><DevTab $active>网络</DevTab><DevTab>性能</DevTab><DevTab>内存</DevTab>
          <IconSlot $ml={6}><Chevrons /></IconSlot>
          <IconSlot $ml={84}><Warn /></IconSlot><CountText $ml={6}>15</CountText>
          <IconSlot $ml={19}><Flag /></IconSlot><CountText $ml={7}>1</CountText>
          <Sep $ml={13} $mr={15} />
          <IconSlot><DevGear /></IconSlot>
          <IconSlot $ml={29}><Kebab /></IconSlot>
          <IconSlot $ml={33}><CloseX /></IconSlot>
        </DevBar>
        <DevRow $h={41} $pl={14} $line>
          <Rec /><IconSlot $ml={20}><Clear /></IconSlot>
          <Sep $ml={16} $mr={21} /><Funnel /><IconSlot $ml={24}><DevSearch /></IconSlot>
          <Sep $ml={17} $mr={17} /><CB /><CBText>保留日志</CBText>
          <Sep $ml={14} $mr={16} /><CB /><CBText>停用缓存</CBText>
          <Spaced $ml={17}>已停用节流模式</Spaced><TriDown />
          <IconSlot $ml={26}><Wifi /></IconSlot>
          <Sep $ml={14} $mr={19} /><UpI /><IconSlot $ml={26}><DownI /></IconSlot>
          <Sep $ml={156} $mr={17} /><DevGear />
        </DevRow>
        <DevRow $h={41}>
          <FilterBox>过滤</FilterBox>
          <CB $ml={22} /><CBText>反转</CBText><Sep $ml={18} $mr={20} />
          <CB /><CBText>隐藏数据网址</CBText>
          <CB $ml={23} /><CBText>隐藏扩展程序网址</CBText>
        </DevRow>
        <DevRow $h={40} $pl={6}>
          <Pill $w={53} $active>全部</Pill>
          <Sep $mr={7} />
          {pills.map(([t, w]) => <Pill key={t} $w={w}>{t}</Pill>)}
          <CB $ml={11} /><CBText $tight>被屏蔽的响应 Cookie</CBText>
        </DevRow>
        <DevRow $h={35} $pl={13}>
          <CB /><CBText>被屏蔽的请求</CBText>
          <CB $ml={24} /><CBText>第三方请求</CBText>
        </DevRow>
        <Overview>
          <Tick>5000 毫秒</Tick><Tick>10000 毫秒</Tick><Tick>15000 毫秒</Tick><Tick>20000 毫秒</Tick><TickLast />
          <Handle /><Handle $right />
          <Blip $x={7} $y={42} $w={12} $h={17} $c="#d3e3fd" />
          <Blip $x={9} $y={44} $w={6} $h={9} $c="#34a853" />
          <Blip $x={12} $y={59} $w={1} $h={14} $c="#7fd49b" />
          <Blip $x={938} $y={73} $w={6} $h={5} $c="#34a853" />
          <Blip $x={973} $y={73} $w={3} $h={5} $c="#34a853" />
        </Overview>
        <Lower>
          <NamesPane>
            <NamesHead>名称</NamesHead>
            <NameList>
              {files.map(([f, k], i) => (
                <NameRow key={i} $odd={i % 2 === 0} $sel={i === 8}>
                  <IconBox>{k === 'doc' ? <DocIcon /> : k === 'brace' ? <BraceIcon /> : <PngIcon />}</IconBox>
                  {f}
                </NameRow>
              ))}
            </NameList>
            <StatusBar>
              17 个请求<Sep $ml={14} $mr={17} />已传输 5.9 kB<Sep $ml={15} $mr={15} />2.8 M
            </StatusBar>
          </NamesPane>
          <DetailPane>
            <DetailTabs>
              <IconSlot><CloseX /></IconSlot>
              <IconSlot $ml={12} />
              <DetailTab $active>标头</DetailTab><DetailTab>载荷</DetailTab><DetailTab>预览</DetailTab><DetailTab>响应</DetailTab><DetailTab>启动器</DetailTab><DetailTab>时间</DetailTab><DetailTab>Cookie</DetailTab>
            </DetailTabs>
            <DetailBody>
              <HeaderList>
                <HeaderFlow>
                  {headers.map(h => (
                    <HeaderRow key={h.k}>
                      <div>{h.k}</div>
                      <div>{h.v.map((l, i) => <ValLine key={i}>{l}</ValLine>)}</div>
                    </HeaderRow>
                  ))}
                </HeaderFlow>
              </HeaderList>
              <Scrollbar><ScrollThumb /><ScrollArrow /><ScrollArrow $down /></Scrollbar>
            </DetailBody>
          </DetailPane>
        </Lower>
      </Dev>

      <RedBox />
      <ArrowLayer viewBox="0 0 580 60">
        <path d="M17 47L548 19" stroke="#f00" strokeWidth="2.500" fill="none" />
        <path d="M548 12l13 7-12 8z" fill="#f00" />
      </ArrowLayer>
      <Watermark>CSDN @bug_producers</Watermark>
    </Page>
  );
}
